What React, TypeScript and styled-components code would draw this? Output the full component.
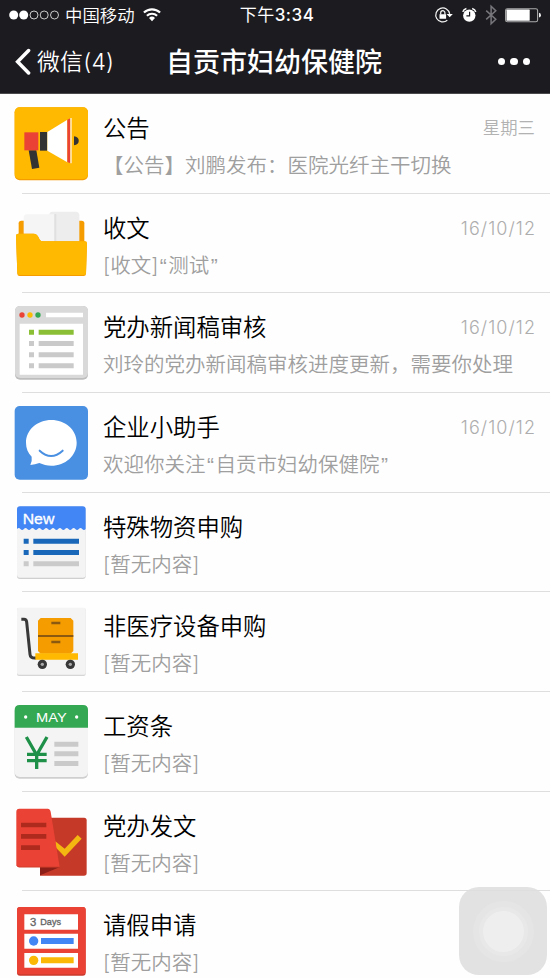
import React from 'react';
import styled, { createGlobalStyle } from 'styled-components';

const GlobalStyle = createGlobalStyle`
  * { box-sizing: border-box; }
  html, body { margin: 0; padding: 0; background: #fefefe; overflow: hidden; }
  body { font-family: Inter, "Noto Sans CJK SC", sans-serif; }
`;

const Screen = styled.div`
  position: relative;
  width: 550px;
  height: 978px;
  overflow: hidden;
  background: #fefefe;
`;

const Header = styled.header`
  height: 94px;
  background: #1c1b20;
  color: #fff;
  border-bottom: 1px solid #4a4a4d;
`;

const StatusBar = styled.div`
  display: grid;
  grid-template-columns: 1fr auto 1fr;
  align-items: center;
  height: 30px;
  padding: 0 9px;
`;

const Carrier = styled.div`
  display: flex;
  align-items: center;
  font: 350 17.4px/30px "Noto Sans CJK SC", sans-serif;
`;

const CarrierName = styled.span`
  margin: 0 8px 0 5px;
`;

const Clock = styled.div`
  font: 500 17px/30px Inter, "Noto Sans CJK SC", sans-serif;
  letter-spacing: 0.5px;
  padding-left: 4px;
`;

const ClockPeriod = styled.span`
  font-weight: 400;
`;

const StatusIcons = styled.div`
  display: flex;
  justify-content: flex-end;
`;

const NavBar = styled.nav`
  display: grid;
  grid-template-columns: 1fr auto 1fr;
  align-items: center;
  height: 63px;
  padding: 0 20px 0 15px;
`;

const BackButton = styled.button`
  display: flex;
  align-items: center;
  gap: 6px;
  padding: 0;
  border: 0;
  background: none;
  color: #fff;
  font: 350 22.8px/34px Inter, "Noto Sans CJK SC", sans-serif;
  letter-spacing: 0.3px;
`;

const NavTitle = styled.h1`
  margin: 0 0 1px;
  padding-left: 3px;
  font: 500 27px/34px "Noto Sans CJK SC", sans-serif;
`;

const MoreButton = styled.button`
  display: flex;
  justify-self: end;
  gap: 5px;
  padding: 0;
  border: 0;
  background: none;
`;

const Dot = styled.i`
  width: 7.5px;
  height: 7.5px;
  border-radius: 50%;
  background: #fff;
`;

const List = styled.ul`
  margin: 0;
  padding: 0;
  list-style: none;
`;

const Row = styled.li`
  display: flex;
  height: 99.67px;
  padding-left: 14px;
`;

const RowIcon = styled.svg`
  flex: none;
  width: 74px;
  height: 74px;
  margin-top: 13px;
`;

const RowBody = styled.div`
  flex: 1;
  min-width: 0;
  padding: 14px 15px 0 15px;
`;

const RowHead = styled.div`
  display: flex;
  justify-content: space-between;
  height: 38px;
`;

const RowTitle = styled.h2`
  margin: 0;
  color: #000;
  font: 350 23.35px/38px "Noto Sans CJK SC", sans-serif;
`;

const RowTime = styled.time<{ $numeric: boolean }>`
  margin-right: ${(p) => (p.$numeric ? '-1px' : '0')};
  color: ${(p) => (p.$numeric ? '#adadad' : '#b2b2b2')};
  font: 350 17.4px/40px Inter, "Noto Sans CJK SC", sans-serif;
  font-size: ${(p) => (p.$numeric ? '18px' : '17.4px')};
  line-height: ${(p) => (p.$numeric ? '41px' : '40px')};
  letter-spacing: ${(p) => (p.$numeric ? '1.05px' : '0')};
`;

const RowText = styled.p`
  margin: 0;
  color: #9f9f9f;
  font: 350 20.5px/39px Inter, "Noto Sans CJK SC", sans-serif;
  white-space: nowrap;
`;

const QuoteMark = styled.span`
  margin-left: 1.5px;
  font: 400 21px/1 "Liberation Sans", sans-serif;
  letter-spacing: 1.5px;
`;

const Divider = styled.hr`
  height: 1px;
  margin: -1px 0 0 22px;
  border: 0;
  background: #dedede;
`;

const AssistiveTouch = styled.div`
  position: absolute;
  left: 459px;
  top: 887px;
  display: flex;
  align-items: center;
  justify-content: center;
  width: 88px;
  height: 88px;
  border-radius: 20px;
  background: rgba(222, 222, 222, 0.88);
`;

const TouchRing = styled.div`
  width: 41px;
  height: 41px;
  border-radius: 50%;
  background: #eee;
  box-shadow: 0 0 0 4px #e8e8e8, 0 0 0 10px #e5e5e5;
`;

const Svg = styled.svg`
  display: block;
  flex: none;
`;

const Signal = () => (
  <Svg width="51" height="12" viewBox="0 0 51 12">
    <circle cx="4.7" cy="6" r="4.5" fill="#fff" />
    <circle cx="14.7" cy="6" r="4.5" fill="#fff" />
    {[25, 35.2, 45.5].map((x) => (
      <circle key={x} cx={x} cy="6" r="4" fill="none" stroke="#ddd" strokeWidth="0.9" />
    ))}
  </Svg>
);

const Wifi = () => (
  <Svg width="18" height="14" viewBox="0 0 18 14">
    <g fill="none" stroke="#fff" strokeWidth="2.1">
      <path d="M.9 4.6a11.7 11.7 0 0 1 16.2 0" />
      <path d="M3.9 7.8a7.3 7.3 0 0 1 10.2 0" />
    </g>
    <path d="M6 10a4.4 4.4 0 0 1 6 0L9 13.3Z" fill="#fff" />
  </Svg>
);

const Indicators = () => (
  <Svg width="107" height="22" viewBox="1 0 107 22">
    <g fill="none" stroke="#f5f5f5" strokeWidth="1.2">
      <path d="M16.7 9.8A7 7 0 1 0 14.3 16.3" />
      <path d="M7.7 10.5V8.8a2.1 2.1 0 0 1 4.2 0v1.7" />
    </g>
    <path d="M6.5 10.2h6.6v4.6H6.5ZM13.6 10h6.2l-3.1 3.3Z" fill="#fff" />
    <circle cx="36.3" cy="11.6" r="6.2" fill="#fff" />
    <path d="M29.8 7.9q.7-2.7 3.6-3.4M42.8 7.9q-.7-2.7-3.6-3.4" fill="none" stroke="#fff" strokeWidth="1.5" />
    <path d="M36.6 7.8v4h-3.2" fill="none" stroke="#1c1b20" strokeWidth="1.2" />
    <path d="M53.2 6.6l9.6 8.6-4.7 4.6V2.2l4.7 4.6-9.6 8.6" fill="none" stroke="#77777b" strokeWidth="1.5" />
    <rect x="72.6" y="4.7" width="32" height="13" rx="1.8" fill="none" stroke="#aaa" strokeWidth="1.1" />
    <rect x="73.5" y="5.6" width="23.2" height="11.2" rx=".6" fill="#fff" />
    <path d="M106 8.8q2 .4 2 2.4t-2 2.4Z" fill="#eee" />
  </Svg>
);

const Chevron = () => (
  <Svg width="16" height="28" viewBox="0 0 16 28">
    <path d="M13.6 2.6L2.6 13.8l11 11.2" fill="none" stroke="#fff" strokeWidth="3.5" strokeLinecap="round" />
  </Svg>
);

const Bullhorn = () => (
  <RowIcon viewBox="42 36 222 222">
    <rect x="44" y="37" width="220" height="219" rx="15" fill="#f59c00" />
    <rect x="44" y="37" width="220" height="215" rx="15" fill="#ffb900" />
    <path d="M86 166h23l9 52-22 4Z" fill="#333" />
    <path d="M73 112h42v54H73Z" fill="#ea4335" />
    <path d="M120 111h22v56h-22Z" fill="#333" />
    <path d="M142 111L202 74V202L142 167Z" fill="#fff" />
    <path d="M202 74l9-4V205l-9-4Z" fill="#ea4335" />
    <path d="M211 69h4V205h-4Z" fill="#fff3dd" />
    <path d="M222 124c19 0 19 27 0 27Z" fill="#333" />
  </RowIcon>
);

const Folder = () => (
  <RowIcon viewBox="42 35 222 222">
    <rect x="56" y="76" width="197" height="100" rx="8" fill="#f59c00" />
    <path d="M148 140V58q0-9 10-9h69q11 0 11 11v80Z" fill="#ededed" />
    <path d="M71 140V68q0-11 10-11h82v83Z" fill="#f5f5f5" />
    <path d="M163 56h6v84h-6Z" fill="#e0e0e0" />
    <path d="M48 121q0-6 7-6h45c20 0 13 23 29 23h125q7 0 7 7l-3 90q0 7-7 7H59q-7 0-7-7Z" fill="#f59c00" />
    <path d="M48 121q0-6 7-6h45c20 0 13 23 29 23h125q7 0 7 7l-3 87q0 7-7 7H59q-7 0-7-7Z" fill="#ffb900" />
  </RowIcon>
);

const BrowserList = () => (
  <RowIcon viewBox="42 34 222 222">
    <rect x="45" y="34" width="219" height="221" rx="15" fill="#bdbdbd" />
    <rect x="45" y="34" width="219" height="216" rx="15" fill="#d9d9d9" />
    <circle cx="66" cy="61" r="8" fill="#ea4335" />
    <circle cx="90" cy="61" r="8" fill="#fbbc05" />
    <circle cx="114" cy="61" r="8" fill="#34a853" />
    <path d="M138 54h111v14H138ZM59 87h190v153H59Z" fill="#fff" />
    <path d="M87 105h15v15H87ZM116 105h105v15H116Z" fill="#8bbf36" />
    {[139, 173, 206].map((y) => (
      <path key={y} d={`M87 ${y}h15v15H87ZM116 ${y}h105v15H116Z`} fill="#cacaca" />
    ))}
  </RowIcon>
);

const Assistant = () => (
  <RowIcon viewBox="42 33 222 222">
    <rect x="44" y="33" width="220" height="221" rx="15" fill="#4a90e2" />
    <path d="M91 210q6-10 4-25C84 173 78 160 78 143c0-39 34-68 76-68s76 29 76 68-34 69-76 69c-13 0-25-3-36-8q-13 4-27 6Z" fill="#fff" />
    <path d="M119 167q34 32 69 0" fill="none" stroke="#4a90e2" strokeWidth="6" strokeLinecap="round" />
  </RowIcon>
);

const NewList = () => (
  <RowIcon viewBox="42 32 222 222">
    <rect x="51" y="34" width="206" height="217" rx="9" fill="#cfcfcf" />
    <rect x="51" y="34" width="206" height="213" rx="9" fill="#f4f4f4" />
    <path
      d={`M51 101V42q0-9 9-9h188q9 0 9 9v59${'q-5 6-10.3 0q-5-6-10.3 0'.repeat(10)}Z`}
      fill="#4285f4"
    />
    <text x="68" y="86" fill="#fff" fontSize="45" fontWeight="500" textLength="95" lengthAdjust="spacingAndGlyphs" fontFamily="Liberation Sans, sans-serif" stroke="#fff" strokeWidth="1">New</text>
    <path d="M71 130h15v15H71ZM100 130h137v15H100ZM71 164h15v15H71ZM100 164h137v15H100Z" fill="#1967b9" />
    <path d="M71 198h15v15H71ZM100 198h137v15H100Z" fill="#cacaca" />
  </RowIcon>
);

const Trolley = () => (
  <RowIcon viewBox="42 31 222 222">
    <rect x="51" y="40" width="206" height="204" rx="6" fill="#d6d6d6" />
    <rect x="51" y="39" width="206" height="201" rx="6" fill="#f4f4f4" />
    <path d="M64 74h8q7 0 8 8l10 97q1 11 14 11h4" fill="none" stroke="#383838" strokeWidth="9" />
    <path d="M122 70h90l8 8v91l-8 8h-90l-8-8V78Z" fill="#f59c00" />
    <path d="M114 121h106v6H114ZM154 81h27v8H154ZM154 138h27v8H154Z" fill="#8b5a10" />
    <path d="M106 176h128v19H106Z" fill="#ffb900" />
    {[127, 211].map((x) => (
      <g key={x}>
        <circle cx={x} cy="209" r="14" fill="#383838" />
        <circle cx={x} cy="209" r="5" fill="#aaa" />
      </g>
    ))}
  </RowIcon>
);

const Payslip = () => (
  <RowIcon viewBox="42 30 222 222">
    <rect x="44" y="34" width="220" height="217" rx="15" fill="#cfcfcf" />
    <rect x="44" y="30" width="220" height="216" rx="15" fill="#f4f4f4" />
    <path d="M44 98V45q0-15 15-15h190q15 0 15 15v53Z" fill="#34a853" />
    <text x="108" y="80" fill="#fff" fontSize="40" textLength="92" lengthAdjust="spacingAndGlyphs" fontFamily="Liberation Sans, sans-serif">MAY</text>
    <circle cx="77" cy="66" r="5" fill="#fff" />
    <circle cx="230" cy="66" r="5" fill="#fff" />
    <path d="M79 126l31 54 31-54M110 177v45M81 178h59M81 197h59" fill="none" stroke="#1f9048" strokeWidth="10" />
    <path d="M163 140h72v15h-72ZM163 169h72v15h-72ZM163 198h72v15h-72Z" fill="#cacaca" />
  </RowIcon>
);

const Leaflet = () => (
  <RowIcon viewBox="42 29 222 222">
    <path d="M120 67h132q8 0 8 8v158q0 8-8 8H120Z" fill="#c53929" />
    <path d="M166 138l28 22 39-41 12 11-51 54-28-29Z" fill="#f4b611" />
    <path d="M120 240V215h60Z" fill="#8c1f18" />
    <path d="M49 49q0-9 9-9h85q7 0 9 9l27 167H58q-9 0-9-9Z" fill="#ea4335" />
    <path d="M63 82h76v14H63ZM63 116h76v14H63ZM63 150h57v14H63Z" fill="#ae2a1c" />
    <path d="M50 210q3 5 8 5h121" fill="none" stroke="#c53929" strokeWidth="2" />
  </RowIcon>
);

const Leave = () => (
  <RowIcon viewBox="42 328 222 222">
    <rect x="51" y="337" width="206" height="206" rx="9" fill="#c93a2e" />
    <rect x="51" y="337" width="206" height="202" rx="9" fill="#ea4335" />
    <path d="M73 359h161v46H73ZM73 417h161v45H73ZM73 475h161v44H73Z" fill="#fff" />
    <text x="90" y="393" fill="#666" stroke="#666" fontSize="34" fontFamily="Liberation Sans, sans-serif">3</text>
    <text x="121" y="391" fill="#666" stroke="#666" fontSize="26" textLength="62" lengthAdjust="spacingAndGlyphs" fontFamily="Liberation Sans, sans-serif">Days</text>
    <circle cx="101" cy="439" r="14" fill="#4285f4" />
    <path d="M123 430h98v18h-98Z" fill="#4285f4" />
    <circle cx="101" cy="497" r="14" fill="#fbb905" />
    <path d="M123 488h98v18h-98Z" fill="#fbb905" />
  </RowIcon>
);

interface Item {
  Icon: React.FC;
  title: string;
  text: string;
  time?: string;
}

const items: Item[] = [
  { Icon: Bullhorn, title: '公告', text: '【公告】刘鹏发布：医院光纤主干切换', time: '星期三' },
  { Icon: Folder, title: '收文', text: '[收文]“测试”', time: '16/10/12' },
  { Icon: BrowserList, title: '党办新闻稿审核', text: '刘玲的党办新闻稿审核进度更新，需要你处理', time: '16/10/12' },
  { Icon: Assistant, title: '企业小助手', text: '欢迎你关注“自贡市妇幼保健院”', time: '16/10/12' },
  { Icon: NewList, title: '特殊物资申购', text: '[暂无内容]' },
  { Icon: Trolley, title: '非医疗设备申购', text: '[暂无内容]' },
  { Icon: Payslip, title: '工资条', text: '[暂无内容]' },
  { Icon: Leaflet, title: '党办发文', text: '[暂无内容]' },
  { Icon: Leave, title: '请假申请', text: '[暂无内容]' },
];

// Curly quotes take a narrow Latin face so they don't occupy a full CJK cell.
const renderText = (text: string) =>
  text
    .split(/([“”])/)
    .map((part, i) => (/[“”]/.test(part) ? <QuoteMark key={i}>{part}</QuoteMark> : part));

export default function App() {
  return (
    <Screen lang="zh-CN">
      <GlobalStyle />
      <Header>
        <StatusBar>
          <Carrier>
            <Signal />
            <CarrierName>中国移动</CarrierName>
            <Wifi />
          </Carrier>
          <Clock>
            <ClockPeriod>下午</ClockPeriod>3:34
          </Clock>
          <StatusIcons>
            <Indicators />
          </StatusIcons>
        </StatusBar>
        <NavBar>
          <BackButton>
            <Chevron />
            微信(4)
          </BackButton>
          <NavTitle>自贡市妇幼保健院</NavTitle>
          <MoreButton aria-label="更多">
            <Dot />
            <Dot />
            <Dot />
          </MoreButton>
        </NavBar>
      </Header>
      <List>
        {items.map(({ Icon, title, text, time }) => (
          <React.Fragment key={title}>
            <Row>
              <Icon />
              <RowBody>
                <RowHead>
                  <RowTitle>{title}</RowTitle>
                  {time && <RowTime $numeric={/^\d/.test(time)}>{time}</RowTime>}
                </RowHead>
                <RowText>{renderText(text)}</RowText>
              </RowBody>
            </Row>
            <Divider />
          </React.Fragment>
        ))}
      </List>
      <AssistiveTouch>
        <TouchRing />
      </AssistiveTouch>
    </Screen>
  );
}
